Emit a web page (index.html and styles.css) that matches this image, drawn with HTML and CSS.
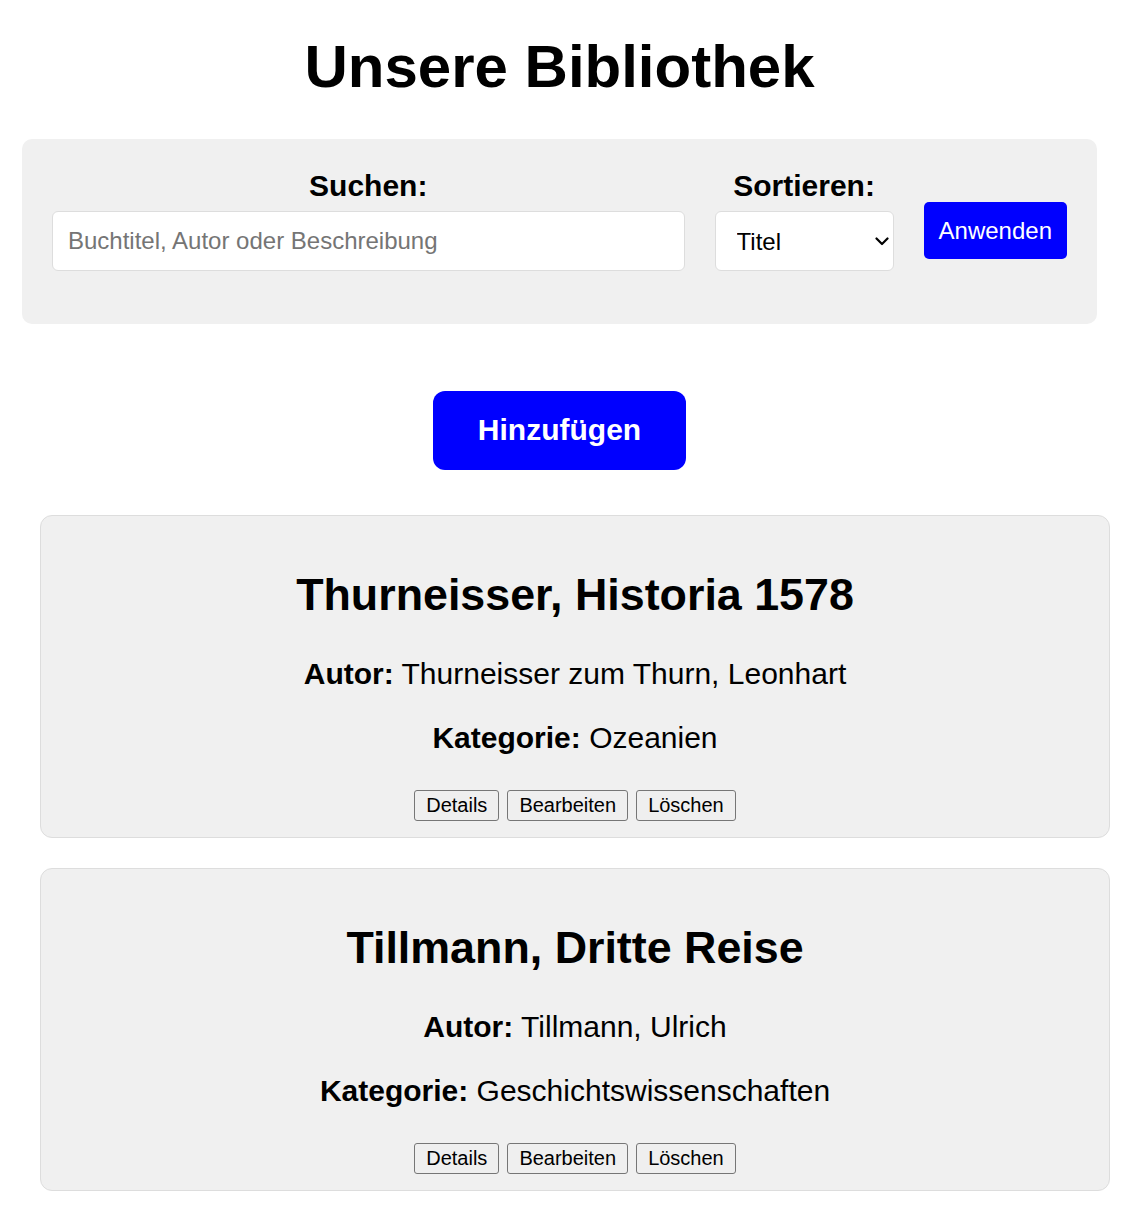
FILE: index.html
```html
<!DOCTYPE html>
<html lang="de">
<head>
<meta charset="utf-8">
<title>Unsere Bibliothek</title>
<link rel="stylesheet" href="styles.css">
</head>
<body>
<div class="top">
  <h1 class="page-title">Unsere Bibliothek</h1>
  <form class="filter" onsubmit="return false">
    <div class="field field-search">
      <label class="field-label" for="q">Suchen:</label>
      <input class="text-input" id="q" type="text" placeholder="Buchtitel, Autor oder Beschreibung">
    </div>
    <div class="field field-sort">
      <label class="field-label" for="sort">Sortieren:</label>
      <div class="select-wrap">
        <select class="select-input" id="sort">
          <option>Titel</option>
          <option>Autor</option>
          <option>Kategorie</option>
        </select>
        <svg class="select-chevron" width="14" height="9" viewBox="0 0 14 9" aria-hidden="true">
          <path d="M1.5 1.5 L7 7 L12.5 1.5" fill="none" stroke="#000" stroke-width="2.2" stroke-linecap="round" stroke-linejoin="round"/>
        </svg>
      </div>
    </div>
    <button class="apply-btn" type="submit">Anwenden</button>
  </form>
  <div class="add-row">
    <button class="add-btn" type="button">Hinzufügen</button>
  </div>
</div>
<div class="books">
  <div class="book-card">
    <h2 class="book-title">Thurneisser, Historia 1578</h2>
    <p class="book-meta"><strong>Autor:</strong> Thurneisser zum Thurn, Leonhart</p>
    <p class="book-meta"><strong>Kategorie:</strong> Ozeanien</p>
    <div class="book-actions">
      <button class="small-btn" type="button">Details</button>
      <button class="small-btn" type="button">Bearbeiten</button>
      <button class="small-btn" type="button">Löschen</button>
    </div>
  </div>
  <div class="book-card">
    <h2 class="book-title">Tillmann, Dritte Reise</h2>
    <p class="book-meta"><strong>Autor:</strong> Tillmann, Ulrich</p>
    <p class="book-meta"><strong>Kategorie:</strong> Geschichtswissenschaften</p>
    <div class="book-actions">
      <button class="small-btn" type="button">Details</button>
      <button class="small-btn" type="button">Bearbeiten</button>
      <button class="small-btn" type="button">Löschen</button>
    </div>
  </div>
</div>
</body>
</html>
```

FILE: styles.css
```css
html, body {
  margin: 0;
  padding: 0;
  background: #ffffff;
  color: #000000;
  font-family: "Liberation Sans", Arial, sans-serif;
}

.top {
  margin: 0 51px 0 22px;
}

.page-title {
  margin: 32px 0 38px;
  font-size: 60px;
  font-weight: bold;
  text-align: center;
}

.filter {
  display: flex;
  align-items: flex-start;
  gap: 30px;
  background: #f0f0f0;
  border-radius: 10px;
  padding: 30px 30px 53px;
}

.field {
  display: flex;
  flex-direction: column;
  align-items: stretch;
}

.field-search {
  flex: 1;
}

.field-label {
  display: block;
  font-size: 30px;
  font-weight: bold;
  text-align: center;
  margin-bottom: 8px;
}

.text-input {
  font-family: "Liberation Sans", Arial, sans-serif;
  font-size: 24px;
  padding: 15px;
  border: 1px solid #dddddd;
  border-radius: 6px;
  background: #ffffff;
  color: #000;
}

.text-input::placeholder {
  color: #757575;
}

.select-wrap {
  position: relative;
  width: 179px;
}

.select-input {
  -webkit-appearance: none;
  appearance: none;
  width: 179px;
  height: 60px;
  font-family: "Liberation Sans", Arial, sans-serif;
  font-size: 24px;
  padding: 0 30px 0 21px;
  border: 1px solid #dddddd;
  border-radius: 6px;
  background-color: #ffffff;
  color: #000;
}

.select-chevron {
  position: absolute;
  right: 5px;
  top: 26px;
  pointer-events: none;
}

.apply-btn {
  margin-top: 33px;
  font-family: "Liberation Sans", Arial, sans-serif;
  font-size: 24px;
  padding: 15px 15px 14px;
  border: none;
  border-radius: 5px;
  background: #0000ff;
  color: #ffffff;
}

.add-row {
  text-align: center;
  margin: 67px 0 45px;
}

.add-btn {
  font-family: "Liberation Sans", Arial, sans-serif;
  font-size: 30px;
  font-weight: bold;
  padding: 22px 45px 23px;
  border: none;
  border-radius: 12px;
  background: #0000ff;
  color: #ffffff;
}

.books {
  margin: 0 38px 30px 40px;
  display: flex;
  flex-direction: column;
  gap: 30px;
}

.book-card {
  background: #f0f0f0;
  border: 1px solid #dddddd;
  border-radius: 12px;
  padding: 16px;
  text-align: center;
}

.book-title {
  margin: 37px 0;
  font-size: 44.8px;
  font-weight: bold;
}

.book-meta {
  margin: 30px 0;
  font-size: 30px;
}

.book-meta strong {
  font-weight: bold;
}

.book-actions {
  display: flex;
  justify-content: center;
  gap: 8px;
  margin-top: 35px;
}

.small-btn {
  font-family: "Liberation Sans", Arial, sans-serif;
  font-size: 20px;
  padding: 3px 11px;
  border: 1px solid #767676;
  border-radius: 3px;
  background: #efefef;
  color: #000;
}
```
